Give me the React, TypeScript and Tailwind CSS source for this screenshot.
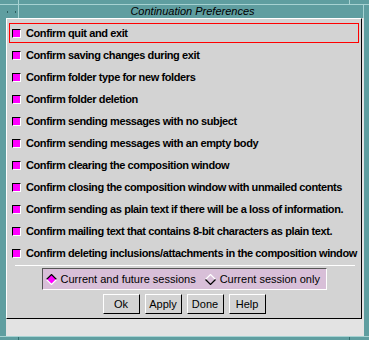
import React from "react";

const items = [
  "Confirm quit and exit",
  "Confirm saving changes during exit",
  "Confirm folder type for new folders",
  "Confirm folder deletion",
  "Confirm sending messages with no subject",
  "Confirm sending messages with an empty body",
  "Confirm clearing the composition window",
  "Confirm closing the composition window with unmailed contents",
  "Confirm sending as plain text if there will be a loss of information.",
  "Confirm mailing text that contains 8-bit characters as plain text.",
  "Confirm deleting inclusions/attachments in the composition window",
];

function Diamond({ on }: { on: boolean }) {
  return (
    <svg width="11" height="11" viewBox="0 0 11 11" className="shrink-0">
      {on && <polygon points="5.5,0.5 10.5,5.5 5.5,10.5 0.5,5.5" fill="#ff00ff" />}
      <polyline points="0.5,5.5 5.5,0.5 10.5,5.5" fill="none" stroke={on ? "#000" : "#fff"} strokeWidth="1.2" />
      <polyline points="0.5,5.5 5.5,10.5 10.5,5.5" fill="none" stroke={on ? "#fff" : "#000"} strokeWidth="1.2" />
    </svg>
  );
}

export default function App() {
  return (
    <div className="w-[369px] h-[340px] bg-[#5f9ea0] flex flex-col overflow-hidden font-['Liberation_Sans',Arial,sans-serif] text-black">
      {/* top frame */}
      <div className="h-[5px] shrink-0 flex border-b border-[#a6d2d2]">
        <div className="w-[19px] border-r border-[#a6d2d2]" />
        <div className="flex-1" />
        <div className="w-[20px] border-l border-[#a6d2d2]" />
      </div>
      {/* title bar */}
      <div className="h-[13px] shrink-0 flex">
        <div className="w-[19px] border-r border-[#a6d2d2] flex items-center pl-[7px] gap-[7px]">
          <span className="w-px h-[2px] bg-[#2f5f5f]" />
          <span className="w-px h-[2px] bg-[#2f5f5f]" />
        </div>
        <div className="flex-1 flex items-center justify-center pl-[3px] italic text-[11px] leading-[13px]">
          Continuation Preferences
        </div>
        <div className="w-px bg-[#a6d2d2]" />
        <div className="w-[5px]" />
      </div>
      {/* content */}
      <div className="h-[318px] shrink-0 ml-[6px] mr-[5px] bg-[#e3e3e3] flex flex-col">
        <div className="h-[301px] mr-[2px] bg-[#d3d3d3] border-t border-l border-white border-r border-b border-r-black border-b-black flex flex-col pt-[3px]">
          <div className="ml-[2px] mr-[2px] flex flex-col">
            {items.map((t, i) => (
              <div
                key={t}
                className={
                  "h-[20px] my-[1px] flex items-center pl-[2px] border " +
                  (i === 0 ? "border-[#ff0000]" : "border-transparent")
                }
              >
                <span className="w-[9px] h-[9px] shrink-0 bg-[#ff00ff] border-t border-l border-black border-r border-b border-r-white border-b-white" />
                <span className="ml-[5px] text-[11px] font-bold tracking-[-0.4px] whitespace-nowrap leading-[13px]">
                  {t}
                </span>
              </div>
            ))}
          </div>
          <div className="mt-[1px] h-px bg-white ml-[8px] mr-[6px]" />
          <div className="mt-[2px] self-center w-[285px] h-[22px] bg-[#d8bfd8] border-t border-l border-[#555] border-r border-b border-r-white border-b-white flex items-center pl-[3px] text-[11px] whitespace-nowrap">
            <Diamond on={true} />
            <span className="ml-[4px]">Current and future sessions</span>
            <span className="ml-[9px]">
              <Diamond on={false} />
            </span>
            <span className="ml-[4px]">Current session only</span>
          </div>
          <div className="mt-[4px] flex justify-center gap-[5px]">
            {["Ok", "Apply", "Done", "Help"].map((b) => (
              <div
                key={b}
                className="w-[37px] h-[20px] flex items-center justify-center text-[11px] border-t border-l border-white border-r border-b border-r-black border-b-black"
              >
                {b}
              </div>
            ))}
          </div>
        </div>
      </div>
      {/* bottom frame */}
      <div className="h-[4px] shrink-0 flex border-t border-[#a6d2d2]">
        <div className="w-[19px] border-r border-[#2f6f6f]" />
        <div className="flex-1" />
        <div className="w-[20px] border-l border-[#2f6f6f]" />
      </div>
    </div>
  );
}
